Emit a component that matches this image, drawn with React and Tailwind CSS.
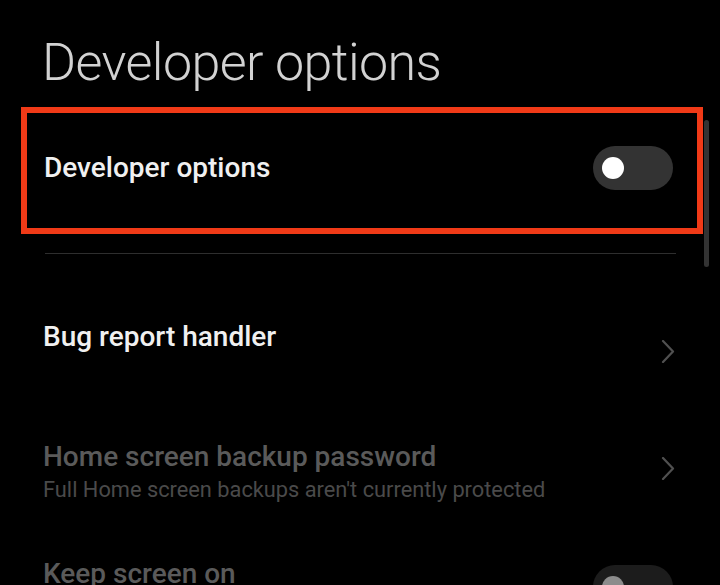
import React from 'react';

const Chevron = ({ className }) => (
    <svg width="14" height="23" viewBox="0 0 14 23" fill="none" className={className}>
        <path d="M2 1 L12 11.5 L2 22" stroke="#505050" strokeWidth="2.2" strokeLinecap="round" strokeLinejoin="round" />
    </svg>
);

const Toggle = ({ disabled }) => (
    <div className={`flex items-center w-[80px] h-[44px] rounded-full pl-[9px] ${disabled ? 'bg-[#1c1c1c]' : 'bg-[#333333]'}`}>
        <div className={`w-[22px] h-[22px] rounded-full ${disabled ? 'bg-[#8c8c8c]' : 'bg-white'}`} />
    </div>
);

const App = () => {
    return (
        <div
            className="relative w-[720px] h-[585px] overflow-hidden bg-black"
            style={{ fontFamily: 'Roboto, "Noto Sans", sans-serif' }}
        >
            {/* Page title */}
            <h1 className="pt-[33px] pl-[42px] text-[52px] leading-[60px] font-light tracking-[-0.6px] text-[#d2d2d2]">
                Developer options
            </h1>

            {/* Highlighted master switch */}
            <div className="mt-[14px] ml-[21px] w-[682px] border-[6px] border-[#f03a17] flex items-center justify-between pt-[33px] pb-[38px] pl-[17px] pr-[24px]">
                <span className="text-[28px] leading-[34px] font-medium text-[#f0f0f0]">Developer options</span>
                <Toggle />
            </div>

            {/* Scrollbar */}
            <div className="absolute left-[704px] top-[120px] w-[5px] h-[147px] rounded-full bg-[#333333]" />

            <div className="mt-[19px] ml-[45px] mr-[44px] h-px bg-[#2e2e2e]" />

            {/* Bug report handler */}
            <div className="flex items-start justify-between pl-[43px] pr-[45px] mt-[66px] h-[34px]">
                <span className="text-[28px] leading-[34px] font-medium text-[#f0f0f0]">Bug report handler</span>
                <Chevron className="mt-[20px]" />
            </div>

            {/* Home screen backup password */}
            <div className="flex items-start justify-between pl-[43px] pr-[45px] mt-[86px]">
                <div className="flex flex-col">
                    <span className="text-[28px] leading-[34px] font-medium text-[#5a5a5a]">Home screen backup password</span>
                    <span className="mt-[3px] text-[21.8px] leading-[26px] text-[#4a4a4a]">Full Home screen backups aren't currently protected</span>
                </div>
                <Chevron className="mt-[17px]" />
            </div>

            {/* Keep screen on */}
            <div className="flex items-start justify-between pl-[43px] pr-[47px] mt-[54px]">
                <span className="text-[28px] leading-[34px] font-medium text-[#5a5a5a]">Keep screen on</span>
                <div className="mt-[8px]">
                    <Toggle disabled />
                </div>
            </div>
        </div>
    );
};

export default App;
